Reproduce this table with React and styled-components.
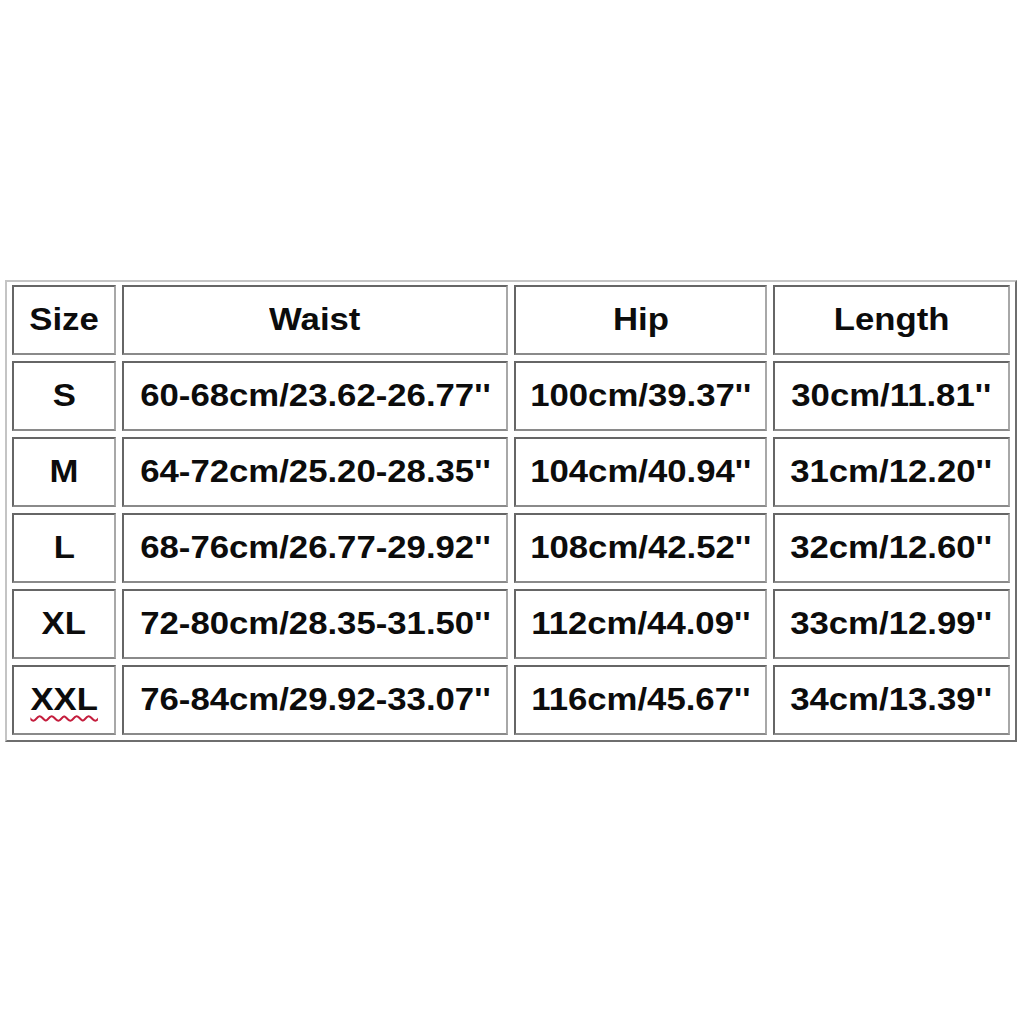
import React from 'react'
import styled, { createGlobalStyle } from 'styled-components'

const GlobalStyle = createGlobalStyle`
  html, body {
    margin: 0;
    padding: 0;
    background: #fff;
  }
`

const Page = styled.div`
  width: 1024px;
  height: 1024px;
  padding: 280px 0 0 5px;
  box-sizing: border-box;
  background: #fff;
`

const Chart = styled.div`
  width: 1012px;
  box-sizing: border-box;
  display: grid;
  grid-template-columns: 104px 386px 253px 237px;
  grid-auto-rows: 70px;
  gap: 6px;
  padding: 3px 5px 5px 5px;
  border: 2px solid;
  border-color: #c4c4c4 #6e6e6e #6e6e6e #c4c4c4;
`

const Cell = styled.div`
  box-sizing: border-box;
  display: flex;
  align-items: center;
  justify-content: center;
  border: 2px solid;
  border-color: #666 #a8a8a8 #8a8a8a #666;
  font-family: 'Liberation Sans', Arial, sans-serif;
  font-weight: bold;
  font-size: 31px;
  color: #0c0c0c;
  white-space: nowrap;
`

// the chart's lettering is drawn a little wide
const Label = styled.span`
  display: inline-block;
  transform: scaleX(1.12);
  text-decoration: ${p => p.misspelled ? 'underline wavy #c41c3c' : 'none'};
  text-decoration-thickness: 1.5px;
  text-underline-offset: 5px;
`

const header = ['Size', 'Waist', 'Hip', 'Length']

const rows = [
  ['S', "60-68cm/23.62-26.77''", "100cm/39.37''", "30cm/11.81''"],
  ['M', "64-72cm/25.20-28.35''", "104cm/40.94''", "31cm/12.20''"],
  ['L', "68-76cm/26.77-29.92''", "108cm/42.52''", "32cm/12.60''"],
  ['XL', "72-80cm/28.35-31.50''", "112cm/44.09''", "33cm/12.99''"],
  ['XXL', "76-84cm/29.92-33.07''", "116cm/45.67''", "34cm/13.39''"]
]

export default function App () {
  return (
    <Page>
      <GlobalStyle />
      <Chart>
        {header.map(h => <Cell key={h}><Label>{h}</Label></Cell>)}
        {rows.map(row => row.map((v, i) => (
          <Cell key={row[0] + i}>
            <Label misspelled={v === 'XXL'}>{v}</Label>
          </Cell>
        )))}
      </Chart>
    </Page>
  )
}
